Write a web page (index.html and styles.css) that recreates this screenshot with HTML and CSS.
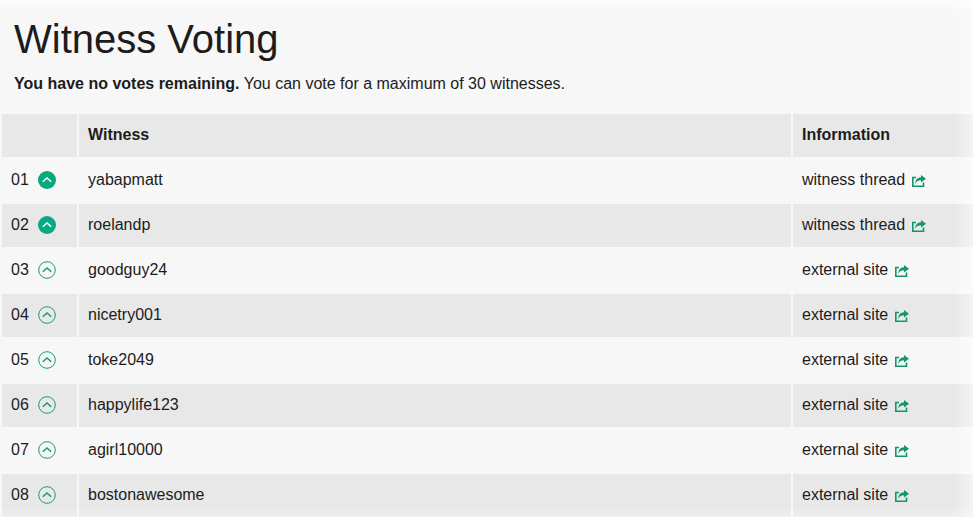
FILE: index.html
```html
<!DOCTYPE html>
<html lang="en">
<head>
<meta charset="utf-8">
<meta name="viewport" content="width=device-width, initial-scale=1">
<title>Witness Voting</title>
<link rel="stylesheet" href="styles.css">
</head>
<body>
<svg class="sprite" aria-hidden="true">
  <symbol id="vote" viewBox="0 0 18 18">
    <circle class="ring" cx="9" cy="9" r="8.3"/>
    <path class="chevron" d="M4.800 10.800 9 6.900l4.200 3.900"/>
  </symbol>
  <symbol id="share" viewBox="0 0 14 12">
    <path d="M4 2.500H.8v8.700h10.700V7.500" fill="none" stroke="currentColor" stroke-width="1.600"/>
    <path d="M9 0 14 3.800 9 7.500V5.300C6.500 5.300 4.800 6.200 3.200 8.800 3.400 4.800 5.500 2.400 9 2.200z" fill="currentColor"/>
  </symbol>
</svg>
<main class="page">
  <header class="intro">
    <h1>Witness Voting</h1>
    <p><strong>You have no votes remaining.</strong> You can vote for a maximum of 30 witnesses.</p>
  </header>
  <div class="table-wrap">
    <table class="witnesses">
      <thead>
        <tr><th class="rank"></th><th>Witness</th><th class="info">Information</th></tr>
      </thead>
      <tbody>
        <tr><td><div class="vote">01<button class="up voted" aria-label="Remove vote for yabapmatt"><svg><use href="#vote"/></svg></button></div></td><td><a href="#">yabapmatt</a></td><td><a href="#">witness thread<svg class="share"><use href="#share"/></svg></a></td></tr>
        <tr><td><div class="vote">02<button class="up voted" aria-label="Remove vote for roelandp"><svg><use href="#vote"/></svg></button></div></td><td><a href="#">roelandp</a></td><td><a href="#">witness thread<svg class="share"><use href="#share"/></svg></a></td></tr>
        <tr><td><div class="vote">03<button class="up" aria-label="Vote for goodguy24"><svg><use href="#vote"/></svg></button></div></td><td><a href="#">goodguy24</a></td><td><a href="#">external site<svg class="share"><use href="#share"/></svg></a></td></tr>
        <tr><td><div class="vote">04<button class="up" aria-label="Vote for nicetry001"><svg><use href="#vote"/></svg></button></div></td><td><a href="#">nicetry001</a></td><td><a href="#">external site<svg class="share"><use href="#share"/></svg></a></td></tr>
        <tr><td><div class="vote">05<button class="up" aria-label="Vote for toke2049"><svg><use href="#vote"/></svg></button></div></td><td><a href="#">toke2049</a></td><td><a href="#">external site<svg class="share"><use href="#share"/></svg></a></td></tr>
        <tr><td><div class="vote">06<button class="up" aria-label="Vote for happylife123"><svg><use href="#vote"/></svg></button></div></td><td><a href="#">happylife123</a></td><td><a href="#">external site<svg class="share"><use href="#share"/></svg></a></td></tr>
        <tr><td><div class="vote">07<button class="up" aria-label="Vote for agirl10000"><svg><use href="#vote"/></svg></button></div></td><td><a href="#">agirl10000</a></td><td><a href="#">external site<svg class="share"><use href="#share"/></svg></a></td></tr>
        <tr><td><div class="vote">08<button class="up" aria-label="Vote for bostonawesome"><svg><use href="#vote"/></svg></button></div></td><td><a href="#">bostonawesome</a></td><td><a href="#">external site<svg class="share"><use href="#share"/></svg></a></td></tr>
      </tbody>
    </table>
  </div>
</main>
</body>
</html>
```
FILE: styles.css
```css
* {
  box-sizing: border-box;
}

body {
  margin: 0;
  background: #f7f7f7;
  color: #1c1c1c;
  font: 16px/24px "Liberation Sans", Arial, sans-serif;
}

.sprite {
  position: absolute;
  width: 0;
  height: 0;
}

.page {
  position: relative;
  overflow: hidden;
}

/* Soft light falloff along the outer edges */
.page::after {
  content: "";
  position: absolute;
  inset: 0;
  pointer-events: none;
  background:
    linear-gradient(to left, rgba(255, 255, 255, 0.5), rgba(255, 255, 255, 0) 20px),
    linear-gradient(to bottom, rgba(255, 255, 255, 0.6), rgba(255, 255, 255, 0) 12px),
    linear-gradient(to top, rgba(255, 255, 255, 0.3), rgba(255, 255, 255, 0) 12px);
}

.intro {
  padding: 12px 14px 16px;
}

h1 {
  margin: 0 0 6px;
  font-size: 40px;
  font-weight: 400;
  line-height: 54px;
}

p {
  margin: 0;
}

.table-wrap {
  margin-right: -2px;
  margin-bottom: -2px;
}

.witnesses {
  width: 100%;
  table-layout: fixed;
  border-spacing: 2px;
}

.rank {
  width: 75px;
}

.info {
  width: 180px;
}

th,
td {
  height: 43px;
  padding: 0 9px 2px;
  text-align: left;
  vertical-align: middle;
}

thead th,
tbody tr:nth-child(even) td {
  background: #e8e8e8;
}

.vote {
  display: flex;
  align-items: center;
  gap: 9px;
}

.up {
  width: 18px;
  height: 18px;
  padding: 0;
  border: 0;
  background: none;
  color: #189c72;
  cursor: pointer;
}

.up svg {
  display: block;
  width: 18px;
  height: 18px;
  fill: none;
  stroke: currentColor;
  stroke-width: 1;
}

.chevron {
  stroke-width: 1.5;
}

.up.voted {
  border-radius: 50%;
  background: #06a980;
  color: #fff;
}

.up.voted svg {
  stroke-width: 0;
}

a {
  color: inherit;
  text-decoration: none;
}

.share {
  width: 14px;
  height: 12px;
  margin-left: 7px;
  color: #159569;
  vertical-align: -2px;
}
```
